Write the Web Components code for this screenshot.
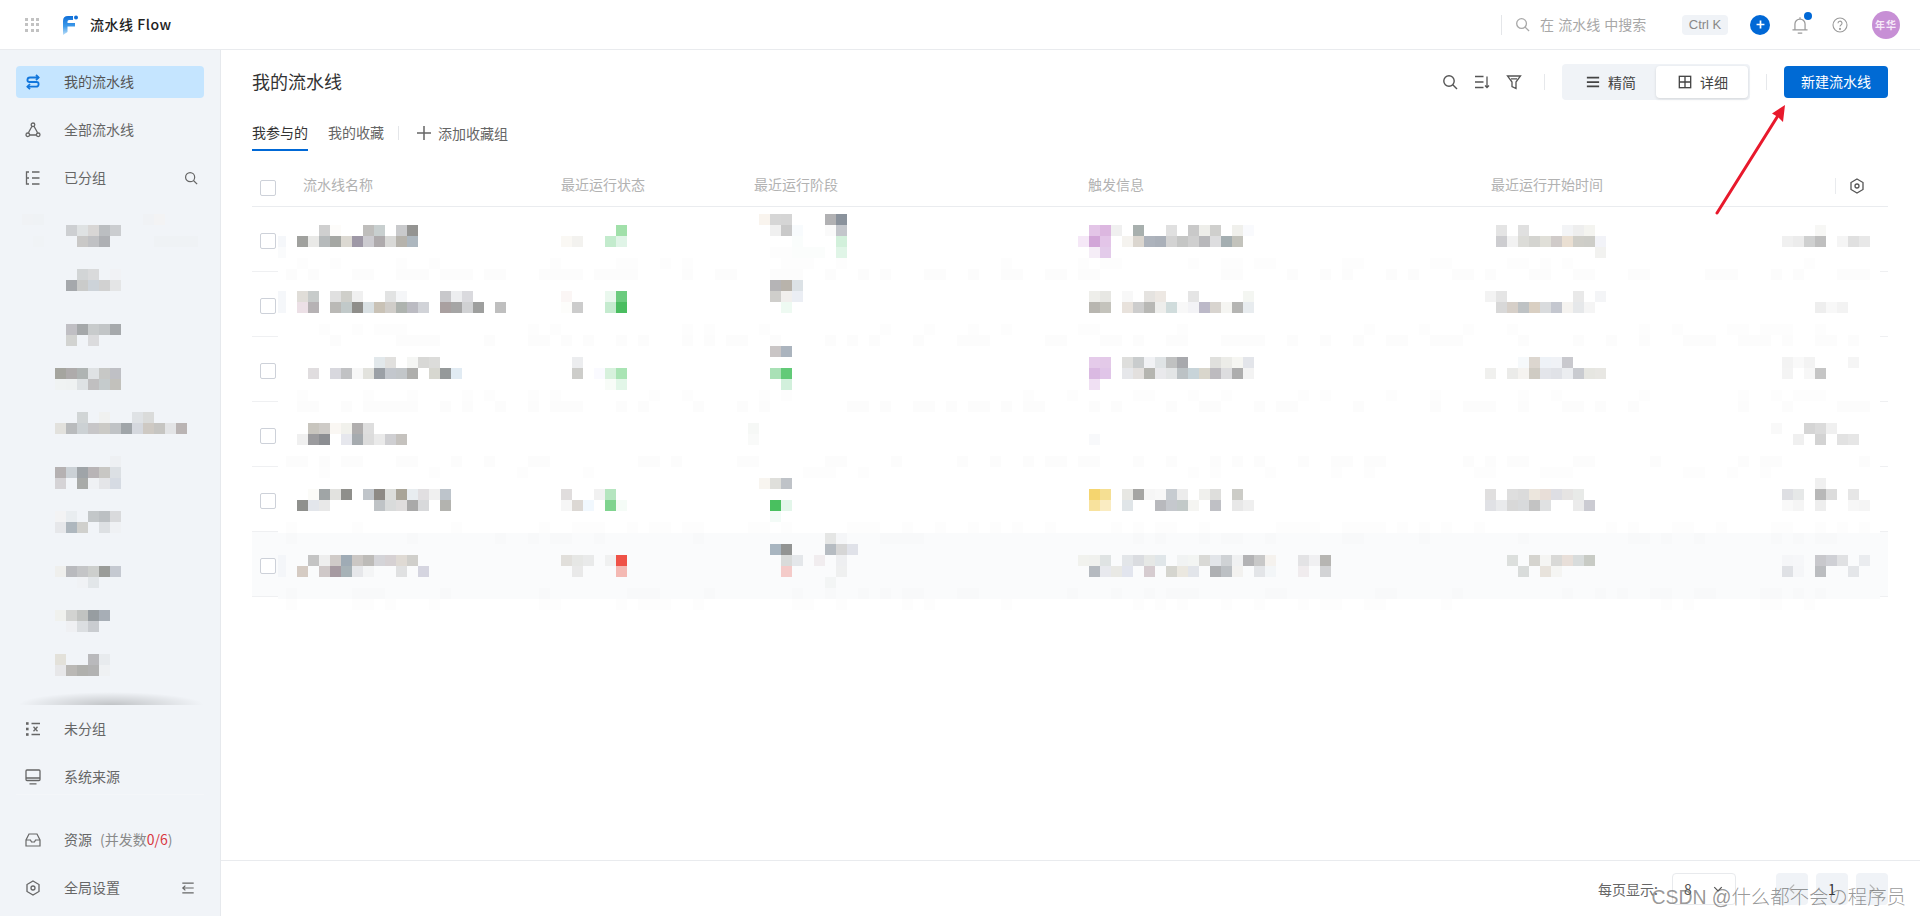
<!DOCTYPE html>
<html lang="zh-CN">
<head>
<meta charset="utf-8">
<title>流水线 Flow</title>
<style>
  html,body{margin:0;padding:0;background:#fff;}
  body{font-family:"Noto Sans CJK SC","Liberation Sans",sans-serif;font-size:14px;color:#555;}
</style>
</head>
<body>
<flow-app></flow-app>
<script>
const FONT = '"Noto Sans CJK SC","Liberation Sans",sans-serif';

const ICONS = {
  search:'<circle cx="7" cy="7" r="5.2"/><path d="M10.8 10.8 15 15"/>',
  flow:'<path d="M13.5 3.5H5A2.6 2.6 0 0 0 2.4 6v.2A2 2 0 0 0 4.4 8h7.2a2 2 0 0 1 2 2v.2a2.6 2.6 0 0 1-2.6 2.5H2.500"/><path d="M11 1l2.6 2.5L11 6M5 10l-2.6 2.7L5 15.2"/>',
  tri:'<path d="M7 4.2 3.4 10.8M9 4.2l3.6 6.6M4.5 13h7"/><circle cx="8" cy="2.8" r="1.8"/><circle cx="2.8" cy="12.8" r="1.8"/><circle cx="13.2" cy="12.8" r="1.8"/>',
  groups:'<path d="M4 2H1.5v12H4M1.5 8H4M7 2h7.5M7 8h7.5M7 14h7.5"/>',
  ungroup:'<path d="M6.5 2.5h8.5M6.5 13.5h8.5M8.5 5.8l4 4.4M12.5 5.8l-4 4.4"/><rect x="1" y="1.2" width="2.6" height="2.6" fill="currentColor" stroke="none"/><rect x="1" y="6.7" width="2.6" height="2.6" fill="currentColor" stroke="none"/><rect x="1" y="12.2" width="2.6" height="2.6" fill="currentColor" stroke="none"/>',
  monitor:'<rect x="1" y="1" width="14" height="10.5" rx="1"/><path d="M1 9h14M4.5 14.8h7"/>',
  inbox:'<path d="M4 2h8l3 6v6H1V8z"/><path d="M1 8h4.5l1 2h3l1-2H15"/>',
  hex:'<path d="M8 1l6 3.5v7L8 15l-6-3.5v-7z"/><circle cx="8" cy="8" r="2"/>',
  collapse:'<path d="M1.5 2.5h13M1.5 13.5h13M14.5 8H2M5 5.2 2 8l3 2.8"/>',
  sort:'<path d="M1 2.5h8.5M1 8h8.5M1 13.5h8.5M13 2.5v11M11 11.5l2 2 2-2"/>',
  filter:'<path d="M1.5 2h13L10 8v6.5L6 12.5V8zM5 4.8h6"/>',
  menu:'<path d="M1 3h14M1 8h14M1 13h14"/>',
  table:'<rect x="1.5" y="1.5" width="13" height="13"/><path d="M8 1.5v13M1.5 8h13"/>',
  bell:'<path d="M3.5 12.3V7.2a4.5 4.5 0 0 1 9 0v5.1M1.3 12.3h13.4M6 15.2h4M8 1v1.6"/>',
  help:'<circle cx="8" cy="8" r="7"/><path d="M6 6.2a2 2 0 1 1 3 1.7c-.7.4-1 .8-1 1.7"/><circle cx="8" cy="11.9" r=".5"/>',
  plus:'<path d="M8 1v14M1 8h14"/>',
  chev:'<path d="M3 5.5l5 5 5-5"/>',
  left:'<path d="M10.5 3l-5 5 5 5"/>',
  right:'<path d="M5.5 3l5 5-5 5"/>'
};

class UiIcon extends HTMLElement{
  connectedCallback(){
    if(this.shadowRoot) return;
    const s=this.getAttribute('size')||16, w=this.getAttribute('weight')||1.4;
    this.attachShadow({mode:'open'}).innerHTML=`<style>:host{display:inline-flex;flex:none;width:${s}px;height:${s}px;color:inherit}svg{display:block;width:100%;height:100%;fill:none;stroke:currentColor;stroke-width:${w}}</style><svg viewBox="0 0 16 16">${ICONS[this.getAttribute('name')]||''}</svg>`;
  }
}
customElements.define('ui-icon',UiIcon);

class TopBar extends HTMLElement{
  constructor(){super();
    this.attachShadow({mode:'open'}).innerHTML=`<style>
    :host{display:flex;align-items:center;height:50px;box-sizing:border-box;border-bottom:1px solid #e9ebee;background:#fff;padding:0 20px 0 25px;font-family:${FONT};flex:none}
    .dots{width:14px;height:14px;display:grid;grid-template-columns:repeat(3,3px);grid-template-rows:repeat(3,3px);justify-content:space-between;align-content:space-between}
    .dots i{background:#c2c2c2}
    .logo{margin-left:23px;width:16px;height:20px;display:block;flex:none}
    .name{margin-left:12px;font-size:14px;font-weight:500;color:#222;line-height:20px;letter-spacing:.55px;padding-bottom:1px}
    .right{margin-left:auto;display:flex;align-items:center}
    .find{width:181px;box-sizing:border-box;height:20px;border-left:1px solid #e4e6e9;padding-left:13px;display:flex;align-items:center;color:#a8a8a8;font-size:14px}
    .find ui-icon{width:15px;height:15px}
    .find span{margin-left:10px;white-space:nowrap;word-spacing:1px;padding-bottom:1px}
    .chip{width:46px;height:20px;border-radius:4px;background:#f0f3f7;color:#888;font-size:13px;line-height:20px;text-align:center;font-family:"Liberation Sans",sans-serif}
    .add{margin-left:22px;width:20px;height:20px;border-radius:50%;background:#0068d6;color:#fff;display:flex;align-items:center;justify-content:center}
    .bell{margin-left:21px;position:relative;color:#9a9a9a;display:flex}
    .bell b{position:absolute;right:-3px;top:-4px;width:8px;height:8px;border-radius:50%;background:#0068d6}
    .help{margin-left:23px;color:#9a9a9a;display:flex}
    .av{margin-left:24px;width:28px;height:28px;border-radius:50%;background:#c78fd5;color:#f6e9f8;font-size:10px;font-weight:700;line-height:28px;text-align:center;letter-spacing:1px}
    </style>
    <div class="dots">${'<i></i>'.repeat(9)}</div>
    <svg class="logo" viewBox="0 0 16 20"><defs><linearGradient id="g" x1="0" y1="0" x2="0" y2="1"><stop offset="0" stop-color="#0f6fd8"/><stop offset=".55" stop-color="#3f9bea"/><stop offset="1" stop-color="#bfe0f8"/></linearGradient></defs><path d="M1 20V6Q1 1 6 1h5v4H7Q5.5 5 5.5 6.5V8H13v3.6H5.5V17z" fill="url(#g)"/><circle cx="14" cy="2.6" r="2" fill="#0f6fd8"/></svg>
    <div class="name">流水线 Flow</div>
    <div class="right">
      <div class="find"><ui-icon name="search" size="14"></ui-icon><span>在 流水线 中搜索</span></div>
      <div class="chip">Ctrl K</div>
      <div class="add"><ui-icon name="plus" size="9" weight="3"></ui-icon></div>
      <div class="bell"><ui-icon name="bell" size="18" weight="1.1"></ui-icon><b></b></div>
      <div class="help"><ui-icon name="help" size="16" weight="1.1"></ui-icon></div>
      <div class="av">年华</div>
    </div>`;
  }
}
customElements.define('top-bar',TopBar);

class NavItem extends HTMLElement{
  constructor(){super();
    this.attachShadow({mode:'open'}).innerHTML=`<style>
    :host{display:flex;align-items:center;height:32px;box-sizing:border-box;padding-left:9px;border-radius:4px;color:#666;font-size:14px;line-height:20px;white-space:nowrap;position:relative}
    :host([active]){background:#c5e5ff;color:#555}
    :host([active]) ::slotted(ui-icon){color:#1176dc}
    .t{margin-left:23px;flex:1;padding-bottom:2px}
    .e{display:flex;margin-right:9px}
    :host([wide-end]) .e{margin-right:6px}
    </style><slot name="icon"></slot><div class="t"><slot></slot></div><div class="e"><slot name="end"></slot></div>`;
  }
}
customElements.define('nav-item',NavItem);

class SideNav extends HTMLElement{
  constructor(){super();
    this.attachShadow({mode:'open'}).innerHTML=`<style>
    :host{display:flex;flex-direction:column;width:221px;box-sizing:border-box;flex:none;background:#f1f4f8;border-right:1px solid #e6e9ed;padding:16px 16px 12px;font-family:${FONT}}
    .top{display:flex;flex-direction:column;gap:16px}
    .list{flex:1}
    .shade{height:13px;background:radial-gradient(ellipse 50% 100% at 50% 100%,rgba(0,0,0,.2),rgba(0,0,0,0));margin-left:2px}
    .src{display:flex;flex-direction:column;gap:16px;margin-top:8px;padding-bottom:1px;border-bottom:1px solid #f4f6f9}
    .bot{display:flex;flex-direction:column;gap:16px;margin-top:29px}
    .sub{color:#8a8a8a;margin-left:8px}.sub b{font-weight:400;color:#d9363e}
    </style>
    <div class="top">
      <nav-item active><ui-icon slot="icon" name="flow" weight="1.8"></ui-icon>我的流水线</nav-item>
      <nav-item><ui-icon slot="icon" name="tri" weight="1.3"></ui-icon>全部流水线</nav-item>
      <nav-item wide-end><ui-icon slot="icon" name="groups" weight="1.3"></ui-icon>已分组<ui-icon slot="end" name="search" size="14"></ui-icon></nav-item>
    </div>
    <div class="list"></div>
    <div class="shade"></div>
    <div class="src">
      <nav-item><ui-icon slot="icon" name="ungroup" weight="1.3"></ui-icon>未分组</nav-item>
      <nav-item><ui-icon slot="icon" name="monitor" weight="1.3"></ui-icon>系统来源</nav-item>
    </div>
    <div class="bot">
      <nav-item><ui-icon slot="icon" name="inbox" weight="1.2"></ui-icon>资源<span class="sub">(并发数<b>0/6</b>)</span></nav-item>
      <nav-item><ui-icon slot="icon" name="hex" weight="1.3"></ui-icon>全局设置<ui-icon slot="end" name="collapse" size="14" weight="1.3"></ui-icon></nav-item>
    </div>`;
  }
}
customElements.define('side-nav',SideNav);

class CheckBox extends HTMLElement{
  constructor(){super();
    this.attachShadow({mode:'open'}).innerHTML=`<style>:host{display:block;flex:none;width:16px;height:16px;box-sizing:border-box;border:1px solid #cdd1d9;border-radius:2px;background:#fff}</style>`;
  }
}
customElements.define('check-box',CheckBox);

class PipelineTable extends HTMLElement{
  constructor(){super();
    let rows='';
    for(let i=0;i<6;i++) rows+=`<div class="row${i==5?' hot':''}"><check-box></check-box></div>`;
    this.attachShadow({mode:'open'}).innerHTML=`<style>
    :host{display:block;margin-top:10px;font-family:${FONT}}
    .head{display:grid;grid-template-columns:51px 258px 193px 334px 403px 344px 53px;height:46px;box-sizing:border-box;border-bottom:1px solid #eaecef;padding-top:1px;align-items:center;color:#b2b2b2;font-size:14px;line-height:20px}
    .head check-box{margin:8px 0 0 8px}
    .end{display:flex;align-items:center;height:16px;border-left:1px solid #e9ebee;color:#555;padding-left:13px;margin-top:4px}
    .row{height:65px;box-sizing:border-box;border-bottom:1px solid #eff0f2;padding:26px 0 0 8px}
    .hot{background:#fafbfc}
    </style>
    <div class="head"><check-box></check-box><div>流水线名称</div><div>最近运行状态</div><div>最近运行阶段</div><div>触发信息</div><div>最近运行开始时间</div><div class="end"><ui-icon name="hex" size="16" weight="1.3"></ui-icon></div></div>
    ${rows}`;
  }
}
customElements.define('pipeline-table',PipelineTable);

class PagerBar extends HTMLElement{
  constructor(){super();
    this.attachShadow({mode:'open'}).innerHTML=`<style>
    :host{display:flex;flex:none;align-items:center;justify-content:flex-end;height:56px;box-sizing:border-box;border-top:1px solid #e9ebee;padding-right:32px;font-family:${FONT};font-size:14px;color:#666}
    .sel{margin-left:14px;width:64px;height:32px;box-sizing:border-box;border:1px solid #e8eaed;border-radius:4px;display:flex;align-items:center;padding:0 11px;justify-content:space-between;color:#555}
    .pg{margin-left:8px;width:32px;height:32px;border-radius:4px;background:#f0f3f7;display:flex;align-items:center;justify-content:center;color:#333}
    .pg.off{color:#b5b5b5}
    .first{margin-left:40px}
    </style>
    <span>每页显示:</span>
    <div class="sel"><span>8</span><ui-icon name="chev" size="12" weight="1.6"></ui-icon></div>
    <div class="pg off first"><ui-icon name="left" size="14"></ui-icon></div>
    <div class="pg">1</div>
    <div class="pg off"><ui-icon name="right" size="14"></ui-icon></div>`;
  }
}
customElements.define('pager-bar',PagerBar);

class PipelinePage extends HTMLElement{
  constructor(){super();
    this.attachShadow({mode:'open'}).innerHTML=`<style>
    :host{display:flex;flex-direction:column;flex:1;min-width:0;font-family:${FONT};background:#fff}
    .body{flex:1;padding:16px 32px 0 31px}
    .bar{display:flex;align-items:center;height:32px}
    h1{margin:0;font-weight:400;font-size:18px;line-height:30px;padding-bottom:2px;color:#333}
    .tools{margin-left:auto;display:flex;align-items:center;color:#555}
    .tools ui-icon+ui-icon{margin-left:16px}
    .sep{width:1px;height:16px;background:#e6e8eb}
    .seg{display:flex;width:188px;height:36px;box-sizing:border-box;padding:2px;margin:0 16px 0 17px;background:#f0f3f7;border-radius:4px}
    .opt{width:92px;box-sizing:border-box;padding-left:2px;display:flex;align-items:center;justify-content:center;gap:8px;font-size:14px;color:#444;border-radius:4px}
    .opt span{padding-bottom:1px}
    .opt.on{background:#fff;box-shadow:0 1px 3px rgba(0,0,0,.12)}
    .btn{margin-left:17px;width:104px;height:32px;background:#006ad4;color:#fff;border-radius:4px;font-size:14px;line-height:31px;text-align:center}
    .tabs{display:flex;margin-top:20px;height:33px;font-size:14px;color:#666;line-height:28px;align-items:flex-start}
    .tab{height:33px;box-sizing:border-box;margin-right:20px}
    .tab.on{color:#333;border-bottom:2px solid #0068d6}
    .tabs .v{width:1px;height:14px;background:#e4e6e9;margin:8px 17px 0 -6px}
    .addg{display:flex;align-items:center;gap:6px;height:30px;color:#666}
    </style>
    <div class="body">
      <div class="bar"><h1>我的流水线</h1>
        <div class="tools">
          <ui-icon name="search" size="16"></ui-icon><ui-icon name="sort" size="16" weight="1.3"></ui-icon><ui-icon name="filter" size="16" weight="1.3"></ui-icon>
          <div class="sep" style="margin-left:22px"></div>
          <div class="seg"><div class="opt"><ui-icon name="menu" size="14" weight="2"></ui-icon><span>精简</span></div><div class="opt on"><ui-icon name="table" size="14" weight="1.5"></ui-icon><span>详细</span></div></div>
          <div class="sep"></div>
          <div class="btn">新建流水线</div>
        </div>
      </div>
      <div class="tabs"><div class="tab on">我参与的</div><div class="tab">我的收藏</div><div class="v"></div><div class="addg"><ui-icon name="plus" size="16" weight="1.5"></ui-icon>添加收藏组</div></div>
      <pipeline-table></pipeline-table>
    </div>
    <pager-bar></pager-bar>`;
  }
}
customElements.define('pipeline-page',PipelinePage);

/* Privacy mosaic laid over the page: an 11px grid of flat cells, as in the source image. */
const MOSAIC = `
214 22 f0f2f5 33 eff2f5 143 f0f2f5 154 f3f3f4
225 66 cdcfd2 77 dfe2e3 88 d8d6d5 99 bbbec1 110 cbcdd0
236 33 f0f3f6 77 c9c8c7 88 c0c1c4 99 aeb0b4 154 eff2f5 165 eff2f5 176 eff2f5 187 eff2f5
269 77 d2d5d6 88 d9dadb 110 f1f2f5
280 66 a5a8ac 77 cacbca 88 cdd3d9 99 d1d1d1 110 e4e5e6
324 66 c0bfc4 77 a5a8aa 88 c8cbcc 99 c2c5c7 110 a6a9ac
335 66 d2d3d1 88 dbdbdd
368 55 a5a59f 66 aeabab 77 afb4b3 88 dfe2e4 99 c7c8c6 110 bfc0c5
379 55 f0f3f3 66 eff2f2 77 dee2e4 88 c0bfc0 99 c5cbcc 110 c2c1bc
412 77 d1d5d6 99 f0f1f0 132 dfe2e5 143 dadbda
423 55 e2e1dd 66 b9bbbd 77 ccd1d4 88 c7c6c8 99 cbcac6 110 c0c3c6 121 a0a5a9 132 d5d8de 143 cec9c3 154 c6c5c2 165 e3e4e6 176 bab4b4
456 110 eef0f3
467 55 b5b1b2 66 cbd1d6 77 9fa4a8 88 b8b4b6 99 c8c7c4 110 dce0e4
478 55 d5d3d6 77 a8aaa8 88 eff1f4 99 e4e5e8 110 d6dbe3
511 55 f3f3f4 66 e9edf0 88 c3c7c9 99 bcc0c3 110 d9dadc
522 55 e6e7ea 66 aeb7be 77 d0d0cd 99 dde0e3 110 eff1f4
566 55 efefed 66 b9babe 77 c4c5c7 88 cdcfcd 99 9a9c99 110 c5c9d1
577 77 f0f2f5 88 e2e6e9
610 55 f0f1ee 66 d2d3d1 77 c1c3c1 88 979da1 99 a7aeb6
621 66 eff0f3 77 dbdee1 88 c9ccd0
654 55 e3e1da 88 b9b9bc 99 e8ebee
665 55 e7e7e9 66 bab8b5 77 b0b0ad 88 b2b2b2 99 eff1f3

214 759 f9f4ee 770 d6d6d6 781 d5d5d5 825 b1b1b3 836 8a929c
225 319 cfcfcf 330 fdfcfa 363 bfbebc 374 c8cfcf 396 c9cacc 407 949492 616 a1e0aa 770 f0f0f0 781 c9c9c9 792 f8fbfd 825 fafafa 836 c3c6cb 1089 e3c5e7 1100 dcb7e0 1111 f0f0f0 1133 a8b0ae 1166 e0e0e0 1188 c9c9c9 1199 eeeeea 1210 cfcfcd 1232 f0f0ec 1243 f9fafd 1496 e4e4e4 1518 e0e0e0 1562 f3f4f6 1573 eeeeee 1584 f4f4f0 1815 f7f7f5
236 278 f5f7fa 297 a0a19e 308 e9e9e7 319 b6babb 330 a5a7a3 341 dcd9d2 352 9e98a6 363 cccbd0 374 aeaaac 385 d9d9d7 396 b6b3ac 407 adb7bf 561 faf8f4 572 f3f2ef 605 c3ebcd 616 e0f4e7 792 fafdfc 836 d2f0db 1078 f5e8f7 1089 d2a6d8 1100 e3c5e8 1122 f5f3ef 1133 dbd6cf 1144 adb3bc 1155 aab0b9 1166 d3d3d3 1177 c5c6c5 1188 cfcfcf 1199 b8b8bb 1210 dddddf 1221 a4aeb1 1232 c3c3bc 1496 cdcdd0 1507 f2f2f2 1518 dcdcd8 1529 d4d4d0 1540 e0dfd8 1551 d0cbc9 1562 eadfd2 1573 cfcec8 1584 cdcdc8 1595 f2f3f8 1782 f0f0f0 1793 ececec 1804 cfd0d0 1815 bfbfbf 1837 f5f5f5 1848 e0e0e0 1859 e8e8e8
247 278 fafbfc 770 fdfdfd 781 fdfdfd 792 fbfdfc 803 fbfdfc 814 fbfdfc 836 e0f5e7 1089 f5edf7 1100 e3cbea 1595 f2f2f0
280 770 b5b4b6 781 b8b3ab 792 dce2e6
291 278 f5f7fa 297 e0ddd8 308 c7cbca 330 e0e0e0 341 cfcfca 352 f0f0f0 385 e2e3e3 396 f5f6f8 440 c8c8cb 451 edeef0 462 dadade 561 fbf6f5 605 eaf8ee 616 6bcb7e 770 cfcecb 781 f1efed 792 ebeef4 1089 eeeeea 1100 e7e7e3 1122 f8f8f8 1144 e5e3e0 1155 ede8e3 1188 e5e5e5 1243 f4f6f2 1485 f3f3f3 1496 e5e5e5 1573 e9e9e9 1595 f4f5f7
302 278 f5f7fa 297 ece0e6 308 b6b2b4 330 bab9b6 341 c1c9c9 352 8f8e8a 363 d9e0e3 374 c9c2b6 385 d0cdc9 396 aeb3af 407 bbbbc2 418 d1d3d8 440 a9a0a0 451 a5a5a5 462 d0d1d3 473 9e9f9e 495 bfbfbf 561 fdfdfb 572 cccccc 605 c5ebcf 616 4abd60 781 eefaf2 1089 b8b6b0 1100 c4c3bc 1122 e8e2dc 1133 cdcdcd 1144 b8b8b5 1155 eeeeec 1166 d0dcdc 1177 f8f8f8 1188 f3f3f6 1199 bcb9c8 1210 d8d4cf 1221 f5f5f2 1232 b5b5b3 1243 e8ecef 1496 d8d8d8 1507 d6cfc8 1518 bec2c4 1529 d9cfc2 1540 d9dbdd 1551 c4c7cf 1562 f5f3f0 1573 e6e8ea 1584 f5f5f5 1815 eeeeee 1826 f8f8f8 1837 f3f3f3
346 770 c9c5c5 781 abb4be
357 374 e2e8eb 385 e1e0de 407 f5f6f4 418 d8d8d6 429 dcdcda 572 ecedef 1089 e5cbea 1100 e3c9e8 1122 dededc 1133 c9cccd 1144 f1f2f5 1155 dfe3e5 1166 c0c1c1 1177 a8a9ad 1210 e0e0dd 1221 ecece8 1232 f6f6f2 1243 e3e5ea 1518 f6f9fb 1529 dcd6cf 1540 eef2f7 1551 f0f2f6 1562 c9c9ce 1782 f3f3f3 1793 f9f9f9 1804 f3f3f3 1848 f5f5f5
368 308 e0dddf 330 d8d8de 341 c1c2c4 352 f7f7f7 363 e2e2dd 374 9ba0a6 385 c3c7cd 396 c2c6c9 407 aeaeac 429 d7d7d0 440 95999a 451 e1ebf3 572 cdcdca 594 fafaff 605 d7f1dd 616 a9e4b4 770 a9e1b6 781 62ca78 1089 dab9e2 1100 e0c5e8 1122 e6e7ea 1133 e3e0de 1144 b5b5b0 1155 e9e9ec 1166 e3e5e6 1177 bcc2c5 1188 c8d4d9 1199 d9d6cc 1210 bdbbbf 1221 dddddf 1232 adadad 1243 f3f3f3 1485 f0f0ee 1507 ebebe9 1518 f5f3f0 1529 cfcbc3 1540 e3e5ea 1551 e0e2e7 1562 ebedf0 1573 c9cbd0 1584 e6e6e1 1595 e8e7e3 1782 f4f4f4 1804 f7f7f7 1815 c5c5c5
379 605 f8fcf8 616 e2f6e8 781 d2f0dc 1089 f0e0f3
423 308 c8c5be 319 cecbc7 330 faf7f3 341 f1f1ec 352 b0aeae 363 dedede 748 f6f8f6 1771 f9f9f9 1804 d5d5d5 1815 dbdbdb 1826 f0f0f0
434 297 f0f0f0 308 9b9b9e 319 8c8e92 341 e6e7ed 352 a6abaf 363 dcdcdc 374 eaeaea 385 cfcfd2 396 c5c2be 748 f9faf9 1089 f8f9fb 1793 f0f0f0 1815 d3d3d3 1837 e2e2e2 1848 e6e6e6
478 759 f8f5f0 770 dfdfdb 781 bfc3c8 1815 f0f0f0
489 308 fbfbf8 319 a0a5a6 330 e2e2df 341 8f8f8b 363 c0c5ca 374 8d8a85 385 dcdedb 396 a9a598 407 e8edf0 418 e1dfe1 429 f0f0f0 440 bdc4cb 561 e0dddd 594 f1f1f1 605 b5e5bf 1089 f5d56f 1100 f5df93 1122 e7e7e3 1133 a5a5a3 1144 f6f6f6 1155 f8f8f8 1166 c7ccd1 1177 ececec 1199 f0f0ed 1210 dededc 1232 ccccc7 1485 e0dfdf 1507 dedede 1518 dbdbdb 1529 ece6dd 1540 e8ded8 1551 dedee3 1562 e6e4e3 1573 e8eae8 1782 dedfe3 1793 e6e8e8 1815 b8b8b8 1826 dcdcdc 1848 e6e6e6
500 297 8f908d 308 e3e6eb 319 e8e8e8 374 bfc3c6 385 d9dbdb 396 dfdddd 407 a9a9a9 418 d8d9db 440 b3b3af 561 f6f6f6 572 dcd8d4 583 f1f8fe 605 80d48f 616 f5fcf7 770 49c05f 781 e3f6ea 1089 f8e29d 1100 faecc2 1122 e0e5e8 1155 b8b9bd 1166 c5c8cd 1177 c2c9c8 1188 f5f5f2 1210 bfc0c5 1232 e8e8e8 1243 efefef 1485 e0e1e5 1496 e9eaec 1507 d8d8d8 1518 d8dadc 1529 c3c3c3 1540 e0e1e2 1573 ebebeb 1584 cbcbd2 1782 f9f9f9 1793 f5f5f5 1815 eeeeee 1848 f7f7f7 1859 f5f5f5
511 770 f3fbf7
533 825 e5e6e5 836 f5f6f8
544 770 a8b5c0 781 929493 825 b6bcc2 836 d6d6d6 847 e0e2e9
555 278 f4f6f9 308 c4c4c4 319 eeeeee 330 d0cbc8 341 9fabb5 352 cbc7c4 363 bdbbb8 374 d4d4d8 385 d6d1d3 396 dfdad4 407 d0cfcb 561 e1dfdb 572 e6e7e5 583 e9eaea 605 f0f1f1 616 ef5247 781 d9dbda 792 e4e7ea 814 f1edef 836 eeeff1 1078 f1f2ee 1089 f0f1ee 1100 dfe3e3 1122 e3e6e9 1133 dadce0 1144 e6e8e6 1155 e0e6e9 1177 f1f3f3 1188 f3f5f3 1199 d9d9d6 1210 e2e5e9 1221 cfd2d5 1232 f0f1f2 1243 b3b3b5 1254 c8c8c8 1265 f5f2ee 1298 e3e3e5 1309 f0f0f2 1320 b6b5b2 1507 dcdfdd 1529 d5d4cf 1540 f5f5f3 1551 d9d9d7 1562 e8dfd9 1573 d8dcdc 1584 c8cbc5 1782 f5f6f8 1793 f6f7f9 1815 c8c8cc 1826 cfd0d5 1837 e0e1e3 1859 eaecef
566 278 f4f6f9 297 d5cbc3 319 cfc8c8 330 a69aa1 341 a7b2b7 352 e6e7ea 363 f4f5f6 396 e0e1e2 418 d5d5e0 572 e9e9e9 616 f4b9b3 781 f4cbc9 836 eff0f0 1089 b5bac0 1100 e8e9ee 1111 e9e9e5 1122 e2e5ee 1144 d6ccd0 1166 d5d5cf 1177 ebe8e0 1188 e2e5ea 1210 aeb0b3 1221 bcc0c4 1232 f3f2f0 1254 e3e5e8 1265 f3f6f8 1298 f0ecee 1320 d2d3d5 1518 d9dcdb 1540 e8e3dc 1551 f5f5f3 1782 dfe1e5 1793 f5f6f8 1815 bbbdc0 1848 e4e6e9
577 825 f3f5f5
`;

class MosaicLayer extends HTMLElement{
  constructor(){super();
    const C=11; let r='';
    const rect=(x,y,w,c)=>`<rect x="${x}" y="${y}" width="${w}" height="${C}" fill="#${c}"/>`;
    /* the row rules are wiped out between x=278 and x=1880, with faint speckle */
    const bands=[[269,'ffffff'],[335,'ffffff'],[401,'ffffff'],[456,'ffffff'],[522,'ffffff'],[588,'fafbfc']];
    let seed=7; const rnd=()=>(seed=(seed*1103515+12345)%2147483648)/2147483648;
    for(const [y,c] of bands){
      r+=rect(278,y,1602,c);
      const tone=y>=522?'f8f9fa':'fcfcfc';
      for(let x=286;x<1870;x+=11){
        if(rnd()<.38) r+=rect(x,y,C,y==522?'fdfdfd':tone);
        if(rnd()<.2) r+=rect(x,y+(y==269||y==335?-11:(y==401?-11:11)),C,y==522?'f8f9fa':'fdfdfd');
      }
    }
    for(const line of MOSAIC.trim().split('\n')){
      const p=line.trim().split(/\s+/); if(p.length<3) continue;
      const y=+p[0];
      for(let i=1;i<p.length;i+=2){ const x=+p[i]; r+=rect(x,y,C-(x%11),p[i+1]); }
    }
    this.attachShadow({mode:'open'}).innerHTML=`<style>:host{position:absolute;left:0;top:0;width:1920px;height:916px;pointer-events:none;z-index:5}svg{display:block}</style><svg width="1920" height="916" viewBox="0 0 1920 916" shape-rendering="crispEdges">${r}</svg>`;
  }
}
customElements.define('mosaic-layer',MosaicLayer);

class RedArrow extends HTMLElement{
  constructor(){super();
    this.attachShadow({mode:'open'}).innerHTML=`<style>:host{position:absolute;left:1700px;top:95px;width:100px;height:130px;z-index:6;pointer-events:none}svg{display:block}</style>
    <svg width="100" height="130" viewBox="1700 95 100 130"><path d="M1717 213 1779 114" stroke="#e8192c" stroke-width="3" stroke-linecap="round" fill="none"/><path d="M1785 105 1772 113.500 1778 117 1783 122z" fill="#e8192c"/></svg>`;
  }
}
customElements.define('red-arrow',RedArrow);

class WaterMark extends HTMLElement{
  constructor(){super();
    this.attachShadow({mode:'open'}).innerHTML=`<style>:host{position:absolute;right:14px;bottom:4px;z-index:7;font-family:"Liberation Sans","Noto Sans CJK SC",sans-serif;font-size:19.4px;line-height:30px;color:rgba(85,85,85,.62);white-space:nowrap;font-weight:300;pointer-events:none}</style>CSDN @什么都不会の程序员`;
  }
}
customElements.define('water-mark',WaterMark);

class FlowApp extends HTMLElement{
  constructor(){super();
    this.attachShadow({mode:'open'}).innerHTML=`<style>
    :host{display:flex;flex-direction:column;position:relative;width:1920px;height:916px;overflow:hidden;background:#fff}
    .main{flex:1;display:flex;min-height:0}
    </style>
    <top-bar></top-bar>
    <div class="main"><side-nav></side-nav><pipeline-page></pipeline-page></div>
    <mosaic-layer></mosaic-layer><red-arrow></red-arrow><water-mark></water-mark>`;
  }
}
customElements.define('flow-app',FlowApp);
</script>
</body>
</html>
